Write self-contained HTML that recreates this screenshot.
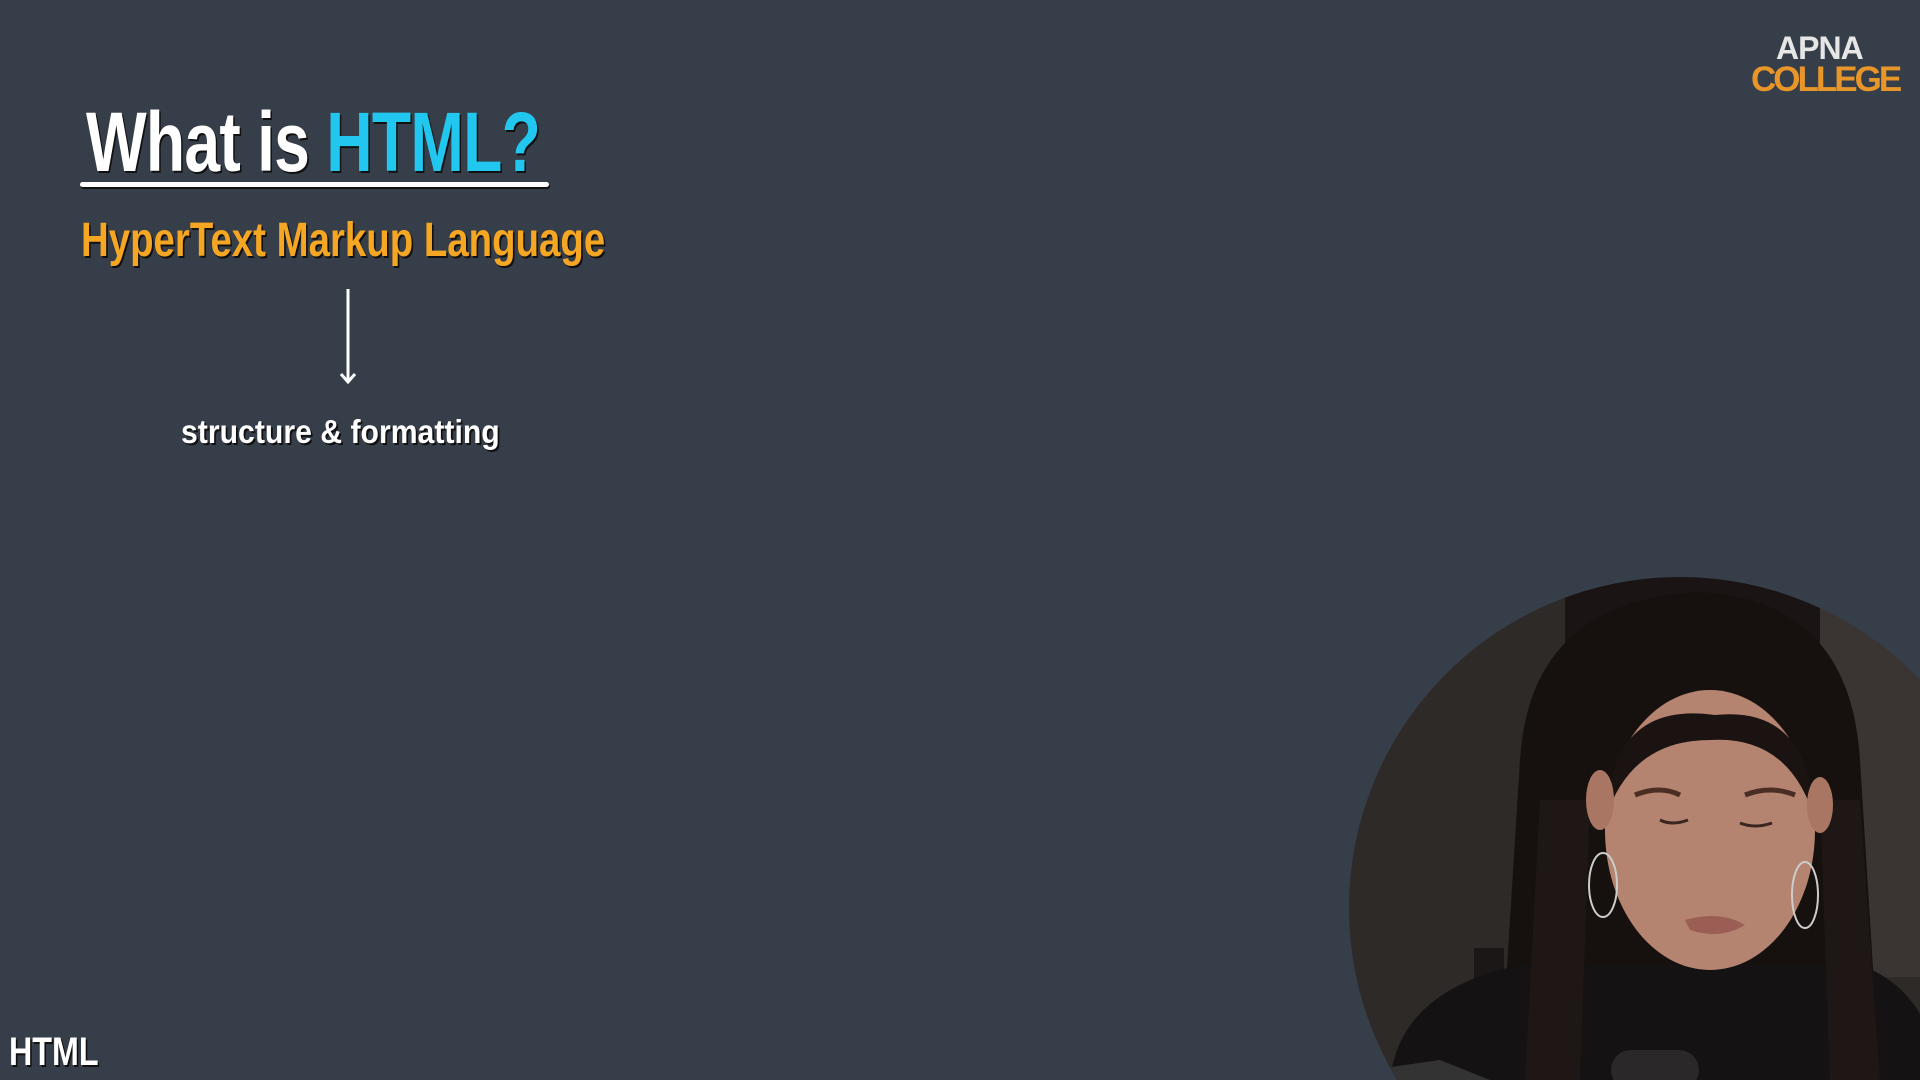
<!DOCTYPE html>
<html><head><meta charset="utf-8"><style>
html,body{margin:0;padding:0}
body{width:1920px;height:1080px;background:#363e49;position:relative;overflow:hidden;font-family:"Liberation Sans Narrow","Liberation Sans",sans-serif}
.t{position:absolute;white-space:nowrap;font-weight:bold;text-shadow:2px 2px 0 #111}
</style></head><body>
<div class="t" style="left:86px;top:94px;font-size:84px;color:#fff;letter-spacing:-1px;transform:scaleX(0.765);transform-origin:left">What is <span style="color:#22c7ef">HTML?</span></div>
<div style="position:absolute;left:80px;top:182px;width:469px;height:5px;background:#fff;border-radius:3px;box-shadow:1px 2px 0 #111"></div>
<div class="t" style="left:81px;top:213px;font-size:48px;color:#f5a623;transform:scaleX(0.80);transform-origin:left">HyperText Markup Language</div>
<svg style="position:absolute;left:336px;top:286px" width="24" height="104"><path d="M12 3V96M5 88L12 96L19 88" stroke="#fff" stroke-width="3" fill="none"/></svg>
<div class="t" style="left:181px;top:413px;font-size:33px;color:#fff;transform:scaleX(0.915);transform-origin:left">structure &amp; formatting</div>
<div class="t" style="left:9px;top:1030px;font-size:40px;color:#fff;transform:scaleX(0.806);transform-origin:left">HTML</div>
<div style="position:absolute;left:1776px;top:30px;font:bold 32px 'Liberation Sans',sans-serif;color:#e6e6e6;letter-spacing:-1px">APNA</div>
<div style="position:absolute;left:1751px;top:60px;font:bold 35px 'Liberation Sans',sans-serif;color:#e8962a;letter-spacing:-3px">COLLEGE</div>
<svg style="position:absolute;left:0;top:0" width="1920" height="1080">
<defs><clipPath id="c"><circle cx="1680" cy="908" r="331"/></clipPath></defs>
<g clip-path="url(#c)">
<rect x="1340" y="570" width="600" height="520" fill="#2e2a28"/>
<rect x="1565" y="577" width="255" height="200" fill="#1a1514"/>
<rect x="1820" y="577" width="120" height="400" fill="#3a3533"/>
<rect x="1474" y="948" width="30" height="32" fill="#1a1716"/>
<path d="M1520 760 Q1530 600 1700 592 Q1850 600 1860 760 L1880 1080 L1500 1080 Z" fill="#16110f"/>
<path d="M1390 1080 Q1400 990 1520 965 L1860 965 Q1930 990 1940 1080 Z" fill="#141212"/>
<path d="M1525 1080 L1540 800 L1590 800 L1580 1080 Z M1820 800 L1860 800 L1880 1080 L1830 1080 Z" fill="#1e1715"/>
<ellipse cx="1710" cy="830" rx="105" ry="140" fill="#b48470"/>
<path d="M1605 820 Q1610 700 1715 715 Q1810 705 1815 820 Q1790 735 1710 740 Q1630 740 1605 820Z" fill="#1a1311"/>
<ellipse cx="1600" cy="800" rx="14" ry="30" fill="#a87663"/>
<ellipse cx="1820" cy="805" rx="13" ry="28" fill="#a87663"/>
<path d="M1635 795 Q1660 785 1680 795 M1745 795 Q1770 785 1795 795" stroke="#4a2e24" stroke-width="5" fill="none"/>
<path d="M1660 820 Q1672 826 1688 820 M1740 823 Q1755 829 1772 823" stroke="#3a2620" stroke-width="3" fill="none"/>
<path d="M1685 920 Q1720 910 1745 925 Q1720 940 1690 930Z" fill="#9a5e55"/>
<ellipse cx="1603" cy="885" rx="14" ry="32" fill="none" stroke="#ccc" stroke-width="2"/>
<ellipse cx="1805" cy="895" rx="13" ry="33" fill="none" stroke="#ccc" stroke-width="2"/>
<rect x="1611" y="1050" width="88" height="40" rx="20" fill="#2a2828"/>
<path d="M1370 1070 L1440 1060 L1490 1080 L1380 1090Z" fill="#333"/>
</g></svg>
</body></html>
